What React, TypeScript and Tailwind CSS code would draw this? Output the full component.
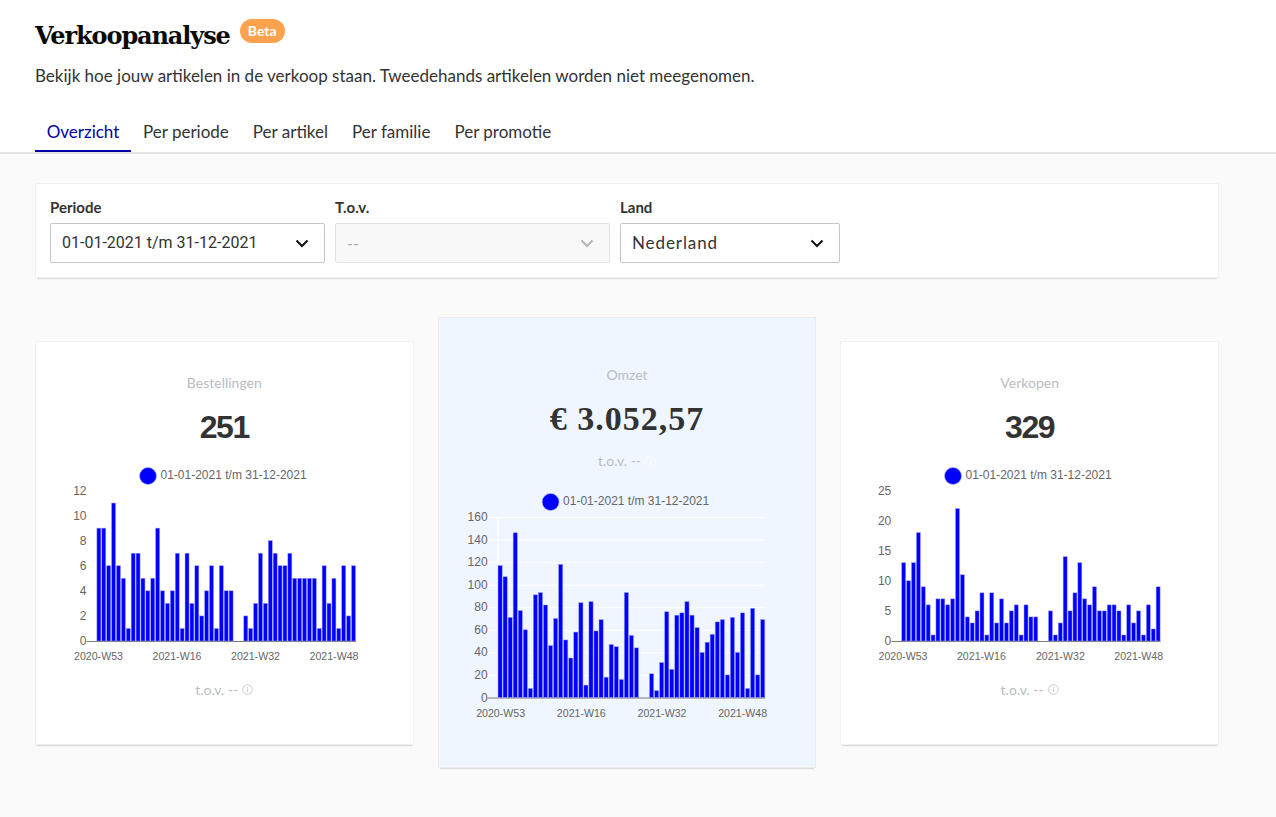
import React from "react";

const A = [9,9,6,11,6,5,1,7,7,5,4,5,9,4,3,4,7,1,7,3,6,2,4,6,1,6,4,4,0,0,2,1,3,7,3,8,7,6,6,7,5,5,5,5,5,1,6,3,5,1,6,2,6];
const B = [117,107,71,146,77,60,8,91,93,82,46,70,118,51,35,58,84,11,85,59,69,18,47,45,16,93,55,44,0,0,21,6,31,76,25,73,75,85,73,62,40,49,56,67,69,20,71,40,75,8,79,20,69];
const C = [13,10,13,18,9,6,1,7,7,6,7,22,11,4,3,5,8,1,8,3,7,3,5,6,1,6,4,4,0,0,5,1,3,14,5,8,13,7,6,9,5,5,6,6,5,1,6,3,5,1,6,2,9];

const font = { fontFamily: '"Liberation Sans", Arial, sans-serif' };

function Chart({ data, max, step, left, right, top, bottom, width, height, legendX, legendY, grid, labelXs }: {
  data: number[]; max: number; step: number; left: number; right: number; top: number; bottom: number;
  width: number; height: number; legendX: number; legendY: number; grid: string; labelXs: number[];
}) {
  const slot = (right - left) / data.length;
  const ticks: number[] = [];
  for (let v = 0; v <= max; v += step) ticks.push(v);
  const y = (v: number) => bottom - (v / max) * (bottom - top);
  const labels = ["2020-W53", "2021-W16", "2021-W32", "2021-W48"];
  return (
    <svg width={width} height={height} className="block" style={font}>
      <circle cx={legendX} cy={legendY + 1} r={8.5} fill="#0000ff" stroke="#b3b3ff" strokeWidth={0.6} />
      <text x={legendX + 12.5} y={legendY + 4} fontSize={12} fill="#666666">01-01-2021 t/m 31-12-2021</text>
      {ticks.map((v) => (
        <g key={v}>
          <line x1={left - 10} x2={right} y1={y(v) + 0.5} y2={y(v) + 0.5} stroke={v === 0 ? "#7a7a7a" : grid} />
          <text x={left - 10} y={y(v) + 4} fontSize={12} fill="#666666" textAnchor="end">{v}</text>
        </g>
      ))}
      <line x1={left + 0.5} x2={left + 0.5} y1={top} y2={bottom} stroke={grid} />
      {data.map((v, i) => v > 0 && (
        <rect key={i} x={left + i * slot + 0.4} y={y(v)} width={slot - 0.9} height={bottom - y(v)} fill="#0000ff" stroke="#9a9aff" strokeWidth={0.5} />
      ))}
      {labels.map((l, i) => (
        <text key={l} x={labelXs[i]} y={bottom + 19} fontSize={10.6} fill="#666666" textAnchor="middle">{l}</text>
      ))}
    </svg>
  );
}

function Tov({ white }: { white?: boolean }) {
  return (
    <div className="flex items-center justify-center gap-1 text-sm text-[#b9bdbf] font-['Lato',sans-serif]">
      <span>t.o.v. --</span>
      <svg width="11" height="11" viewBox="0 0 11 11" fill="none" stroke={white ? "#ffffff" : "#b9bdbf"} strokeWidth="0.8">
        <circle cx="5.5" cy="5.5" r="4.8" />
        <line x1="5.5" y1="4.8" x2="5.5" y2="8.2" />
        <line x1="5.5" y1="2.8" x2="5.5" y2="3.7" />
      </svg>
    </div>
  );
}

function Select({ value, w, disabled, textClass }: { value: string; w: string; disabled?: boolean; textClass: string }) {
  return (
    <div className={`${w} h-10 flex items-center justify-between pl-[11px] pr-[15px] rounded-[2px] border ${disabled ? "bg-[#f8f8f8] border-[#e2e2e2] text-[#a8a8a8]" : "bg-white border-[#c6c6c6] text-[#333333]"}`}>
      <span className={textClass}>{value}</span>
      <svg width="14" height="14" viewBox="0 0 14 14" fill="none" stroke={disabled ? "#b5b5b5" : "#111111"} strokeWidth="2">
        <path d="M1.5 4.5 L7 10 L12.5 4.5" />
      </svg>
    </div>
  );
}

const cardShadow = "shadow-[0_3px_1px_-2px_rgba(0,0,0,0.12)]";

export default function App() {
  return (
    <div className="min-h-[817px] bg-[#fafafa] text-[#333333] font-['Lato',sans-serif]">
      <header className="bg-white h-[154px] border-b-2 border-[#e5e5e5] px-[35px] pt-[19px]">
        <div className="flex items-start gap-[10px] h-[34px]">
          <h1 className="mt-[3px] text-2xl leading-[28px] font-bold text-[#0a0a0a] font-['DejaVu_Serif',serif] tracking-[-1.1px]">Verkoopanalyse</h1>
          <span className="h-6 px-[8px] rounded-full bg-[#ffa24f] text-white text-sm font-bold leading-6">Beta</span>
        </div>
        <p className="mt-[11px] text-[17px] leading-6 text-[#333333]">Bekijk hoe jouw artikelen in de verkoop staan. Tweedehands artikelen worden niet meegenomen.</p>
        <nav className="flex mt-[32px] text-[17px] h-[24px] items-start">
          <span className="w-24 h-[32px] text-center leading-6 border-b-2 border-[#0000a4] text-[#0000a4]">Overzicht</span>
          <span className="ml-3 leading-6">Per periode</span>
          <span className="ml-6 leading-6">Per artikel</span>
          <span className="ml-6 leading-6">Per familie</span>
          <span className="ml-6 leading-6">Per promotie</span>
        </nav>
      </header>

      <main className="pl-[35px] pr-[57px] pt-[29px]">
        <section className={`h-[95px] bg-white border border-[#f1f1f1] ${cardShadow} px-[14px] pt-[13px] flex gap-[10px]`}>
          <div>
            <div className="text-[15px] font-bold leading-5 mb-[6px]">Periode</div>
            <Select value="01-01-2021 t/m 31-12-2021" w="w-[275px]" textClass="text-base font-['Roboto',sans-serif]" />
          </div>
          <div>
            <div className="text-[15px] font-bold leading-5 mb-[6px]">T.o.v.</div>
            <Select value="--" w="w-[275px]" disabled textClass="text-base" />
          </div>
          <div>
            <div className="text-[15px] font-bold leading-5 mb-[6px]">Land</div>
            <Select value="Nederland" w="w-[220px]" textClass="text-[17px] tracking-[0.9px]" />
          </div>
        </section>

        <section className="mt-[39px] grid grid-cols-3 gap-6 items-center">
          <div className={`h-[404px] bg-white border border-[#f0f0f0] ${cardShadow} pt-[31px] flex flex-col items-center`}>
            <div className="text-sm text-[#b9bdbf] leading-5">Bestellingen</div>
            <div className="mt-[14px] text-[32px] leading-[40px] font-bold text-[#333333] tracking-[-1.4px]" style={font}>251</div>
            <div className="self-start mt-[14px]">
              <Chart data={A} max={12} step={2} left={60.5} right={320} top={29.5} bottom={180} width={376} height={206} legendX={112} legendY={14} grid="#ffffff" labelXs={[62.5, 141, 219.5, 298]} />
            </div>
            <div className="mt-[13px]"><Tov /></div>
          </div>

          <div className={`h-[451px] bg-[#eff6ff] border border-[#ececec] ${cardShadow} pt-[47px] flex flex-col items-center`}>
            <div className="text-sm text-[#b9bdbf] leading-5">Omzet</div>
            <div className="mt-[14px] text-[34px] leading-[40px] font-bold text-[#333333] font-['Liberation_Serif',serif] tracking-[1px]">€ 3.052,57</div>
            <div className="mt-[12px]"><Tov white /></div>
            <div className="self-start mt-[16px]">
              <Chart data={B} max={160} step={20} left={58.6} right={326.3} top={30} bottom={210.5} width={376} height={232} legendX={111.6} legendY={14} grid="#ffffff" labelXs={[61.6, 142.3, 223, 303.6]} />
            </div>
          </div>

          <div className={`h-[404px] bg-white border border-[#f0f0f0] ${cardShadow} pt-[31px] flex flex-col items-center`}>
            <div className="text-sm text-[#b9bdbf] leading-5">Verkopen</div>
            <div className="mt-[14px] text-[32px] leading-[40px] font-bold text-[#333333] tracking-[-1.4px]" style={font}>329</div>
            <div className="self-start mt-[14px]">
              <Chart data={C} max={25} step={5} left={60.3} right={319.6} top={29.5} bottom={180} width={376} height={206} legendX={112} legendY={14} grid="#ffffff" labelXs={[62, 140.4, 219.4, 297.7]} />
            </div>
            <div className="mt-[13px]"><Tov /></div>
          </div>
        </section>
      </main>
    </div>
  );
}
